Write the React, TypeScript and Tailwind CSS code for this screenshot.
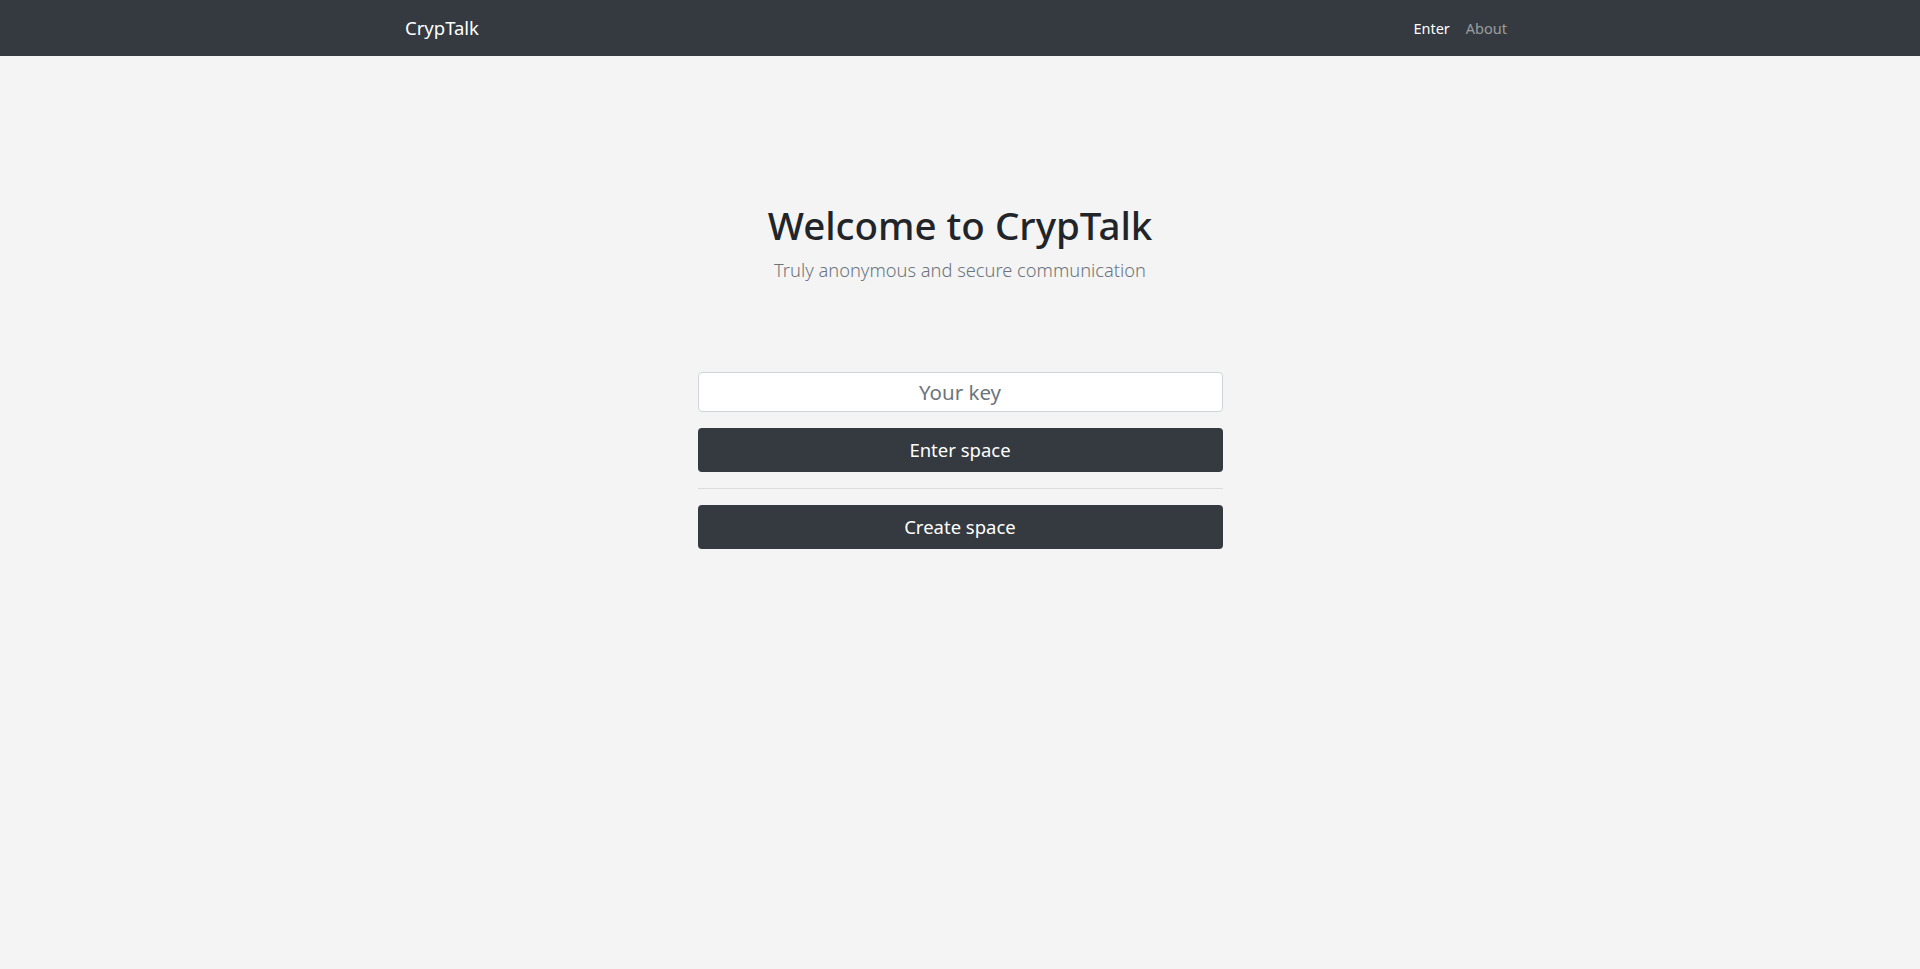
import React from 'react';

const App: React.FC = () => {
  return (
    <div className="min-h-screen bg-[#f4f4f4] font-['Noto_Sans',sans-serif] text-[#212529]">
      {/* Navbar */}
      <nav className="h-14 bg-[#343a40]">
        <div className="mx-auto flex h-full w-[1110px] items-center justify-between">
          <a href="#" className="text-[18.5px] text-white">CrypTalk</a>
          <div className="mt-[2px] flex items-center gap-4 pr-2 text-[14.5px]">
            <a href="#" className="text-white">Enter</a>
            <a href="#" className="text-white/50">About</a>
          </div>
        </div>
      </nav>

      {/* Hero */}
      <main className="flex flex-col items-center pt-[146px]">
        <h1 className="text-[38.5px] font-medium leading-[1.2]">Welcome to CrypTalk</h1>
        <p className="mt-2 text-[18.3px] font-light text-[#6c757d]">Truly anonymous and secure communication</p>

        <div className="mt-[88px] flex w-[525px] flex-col gap-4">
          <input
            type="text"
            placeholder="Your key"
            className="h-10 w-full rounded border border-[#ced4da] bg-white px-3 text-center text-[20.5px] text-[#495057] outline-none placeholder:text-[#6c757d]"
          />
          <button className="h-11 w-full rounded bg-[#343a40] text-[18.5px] text-white">Enter space</button>
          <hr className="border-t border-[#dcdcdc]" />
          <button className="h-11 w-full rounded bg-[#343a40] text-[18.5px] text-white">Create space</button>
        </div>
      </main>
    </div>
  );
};

export default App;
